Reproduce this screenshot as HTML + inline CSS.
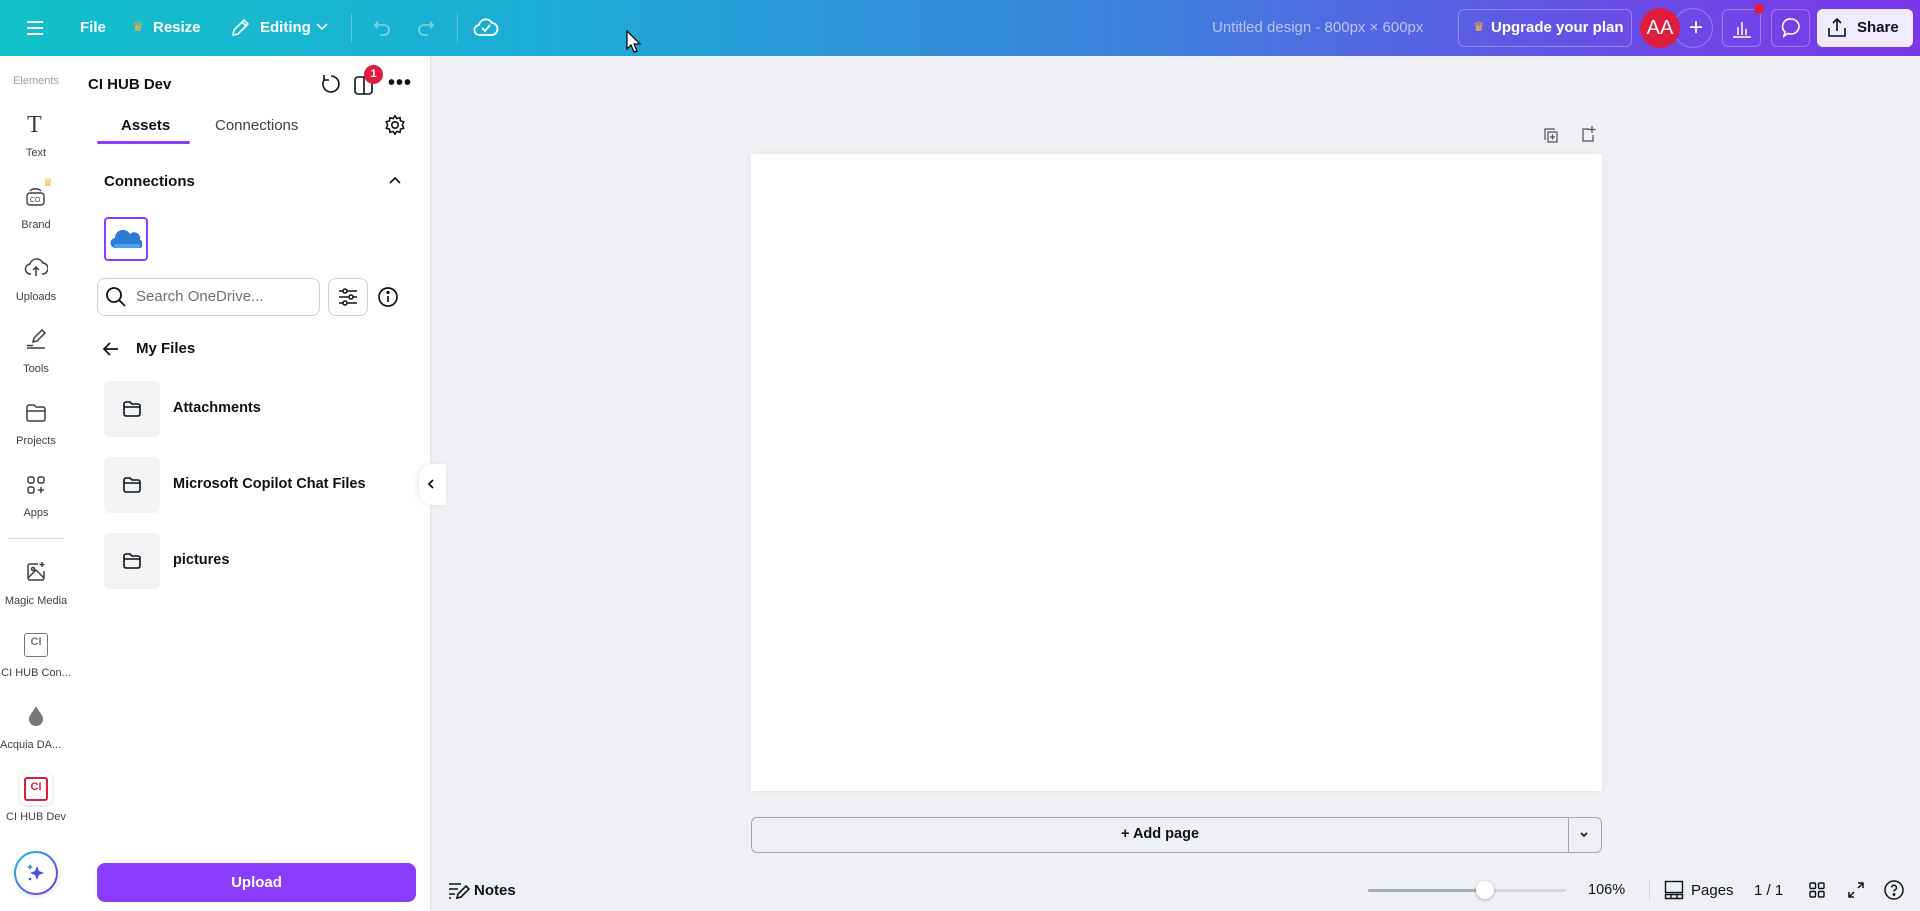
<!DOCTYPE html>
<html><head><meta charset="utf-8"><style>
*{box-sizing:border-box;margin:0;padding:0}
body{width:1920px;height:911px;overflow:hidden;background:#eff0f4;font-family:"Liberation Sans",sans-serif;color:#0d1216;position:relative}
.abs{position:absolute}
.top{left:0;top:0;width:1920px;height:56px;background:linear-gradient(90deg,#11c2ca 0%,#1eaad4 30%,#3f7fde 60%,#6a4ce6 85%,#7b38e8 100%)}
.tw{color:#fff;font-size:15px;font-weight:bold;top:19px}
.rail{left:0;top:56px;width:86px;height:855px;background:#fff}
.ri{width:72px;text-align:center;font-size:11px;color:#3b3f45;left:0;white-space:nowrap}
.panel{left:86px;top:56px;width:345px;height:855px;background:#fff;border-right:1px solid #e3e5e8}
.ft{left:104px;width:56px;height:56px;background:#f2f3f5;border-radius:6px}
.fl{left:173px;font-size:14.5px;font-weight:bold}
</style></head><body>
<div class="abs top"></div>
<svg class="abs" style="left:25px;top:18px" width="20" height="20" viewBox="0 0 20 20" stroke="#fff" stroke-width="2" fill="none"><path d="M2 4h16M2 10h16M2 16h16"/></svg>
<div class="abs tw" style="left:80px">File</div>
<div class="abs" style="left:132px;top:19px;color:#f6b23c;font-size:13px">♛</div>
<div class="abs tw" style="left:153px">Resize</div>
<svg class="abs" style="left:229px;top:17px" width="22" height="22" viewBox="0 0 22 22" stroke="#fff" stroke-width="1.6" fill="none"><path d="M4 18l1-5L15 3l4 4L9 17z M13 5l4 4"/></svg>
<div class="abs tw" style="left:260px">Editing</div>
<svg class="abs" style="left:316px;top:22px" width="12" height="10" viewBox="0 0 12 10" stroke="#fff" stroke-width="1.6" fill="none"><path d="M1 2l5 5 5-5"/></svg>
<div class="abs" style="left:351px;top:13px;width:1px;height:30px;background:rgba(255,255,255,.3)"></div>
<svg class="abs" style="left:371px;top:17px" width="22" height="22" viewBox="0 0 22 22" stroke="rgba(255,255,255,.45)" stroke-width="1.6" fill="none"><path d="M7 5L4 8l3 3M4 8h9a5 5 0 010 10H9"/></svg>
<svg class="abs" style="left:415px;top:17px" width="22" height="22" viewBox="0 0 22 22" stroke="rgba(255,255,255,.45)" stroke-width="1.6" fill="none"><path d="M15 5l3 3-3 3M18 8H9a5 5 0 000 10h4"/></svg>
<div class="abs" style="left:457px;top:13px;width:1px;height:30px;background:rgba(255,255,255,.3)"></div>
<svg class="abs" style="left:473px;top:15px" width="26" height="24" viewBox="0 0 26 24" stroke="#fff" stroke-width="1.8" fill="none"><path d="M7 20a5 5 0 01-1-10 7 7 0 0113-2 5 5 0 01-1 12z"/><path d="M9 13l3 3 5-6"/></svg>
<svg class="abs" style="left:626px;top:30px" width="16" height="24" viewBox="0 0 16 24"><path d="M1 1v18l4-4 3 7 3-1-3-7h6z" fill="#fff" stroke="#000" stroke-width="1.2"/></svg>
<div class="abs" style="left:1212px;top:19px;font-size:15px;color:#b9c4f2">Untitled design - 800px × 600px</div>
<div class="abs" style="left:1458px;top:9px;width:174px;height:38px;border:1px solid rgba(255,255,255,.3);border-radius:6px"></div>
<div class="abs" style="left:1473px;top:19px;color:#f6b23c;font-size:13px">♛</div>
<div class="abs tw" style="left:1491px">Upgrade your plan</div>
<div class="abs" style="left:1673px;top:8px;width:40px;height:40px;border:1px solid rgba(255,255,255,.3);border-radius:50%;color:#fff;font-size:24px;text-align:center;line-height:37px;padding-left:6px">+</div>
<div class="abs" style="left:1640px;top:8px;width:40px;height:40px;border-radius:50%;background:#e11d3f;color:#fff;font-size:20px;text-align:center;line-height:40px">AA</div>
<div class="abs" style="left:1722px;top:9px;width:39px;height:38px;border:1px solid rgba(255,255,255,.3);border-radius:6px"></div>
<svg class="abs" style="left:1731px;top:17px" width="22" height="22" viewBox="0 0 22 22" stroke="#fff" stroke-width="1.5" fill="none"><path d="M2 20h18M7 18V10M11 18V5M15 18v-6"/></svg>
<div class="abs" style="left:1754px;top:4px;width:10px;height:10px;border-radius:50%;background:#e11d3f"></div>
<div class="abs" style="left:1771px;top:9px;width:39px;height:38px;border:1px solid rgba(255,255,255,.3);border-radius:6px"></div>
<svg class="abs" style="left:1779px;top:16px" width="24" height="24" viewBox="0 0 24 24" stroke="#fff" stroke-width="1.6" fill="none"><path d="M12 3a8 7.5 0 110 15 9 9 0 01-3-.5L5 20l1-4A7.5 7.5 0 0112 3z"/></svg>
<div class="abs" style="left:1817px;top:9px;width:96px;height:38px;background:#f0ebfd;border-radius:6px"></div>
<svg class="abs" style="left:1825px;top:16px" width="24" height="24" viewBox="0 0 24 24" stroke="#0d1216" stroke-width="1.6" fill="none"><path d="M12 15V3M8 7l4-4 4 4M4 12v8h16v-8"/></svg>
<div class="abs" style="left:1857px;top:19px;font-size:15px;font-weight:bold;color:#0d1216">Share</div>

<div class="abs rail"></div>
<div class="abs ri" style="top:75px;color:#9aa0a8">Elements</div>
<div class="abs" style="left:27px;top:112px;font-family:'Liberation Serif',serif;font-size:24px;color:#3b3f45">T</div>
<div class="abs ri" style="top:147px">Text</div>
<svg class="abs" style="left:24px;top:184px" width="24" height="24" viewBox="0 0 24 24" stroke="#3b3f45" stroke-width="1.4" fill="none"><rect x="3" y="9" width="17" height="12" rx="3"/><path d="M6 7c3-3 8-3 11 0"/><text x="6" y="18" font-size="7" fill="#3b3f45" stroke="none" font-family="Liberation Sans">CO</text></svg>
<div class="abs" style="left:43px;top:176px;color:#f6b23c;font-size:11px">♛</div>
<div class="abs ri" style="top:219px">Brand</div>
<svg class="abs" style="left:24px;top:256px" width="24" height="24" viewBox="0 0 24 24" stroke="#3b3f45" stroke-width="1.5" fill="none"><path d="M7 18a5 5 0 01-1-10 7 7 0 0113-1 5 5 0 01-1 11M12 20v-8M9 14l3-3 3 3"/></svg>
<div class="abs ri" style="top:291px">Uploads</div>
<svg class="abs" style="left:24px;top:327px" width="24" height="24" viewBox="0 0 24 24" stroke="#3b3f45" stroke-width="1.5" fill="none"><path d="M9 15l1-4 8-8 3 3-8 8zM3 19c2-2 4 1 6-1M3 21h18"/></svg>
<div class="abs ri" style="top:363px">Tools</div>
<svg class="abs" style="left:24px;top:401px" width="24" height="24" viewBox="0 0 24 24" stroke="#3b3f45" stroke-width="1.5" fill="none"><path d="M3 6a2 2 0 012-2h5l2 2h7a2 2 0 012 2v10a2 2 0 01-2 2H5a2 2 0 01-2-2zM3 10h18"/></svg>
<div class="abs ri" style="top:435px">Projects</div>
<svg class="abs" style="left:24px;top:473px" width="24" height="24" viewBox="0 0 24 24" stroke="#3b3f45" stroke-width="1.5" fill="none"><rect x="4" y="4" width="6" height="6" rx="2"/><rect x="14" y="4" width="6" height="6" rx="2"/><rect x="4" y="14" width="6" height="6" rx="2"/><path d="M17 14v6M14 17h6"/></svg>
<div class="abs ri" style="top:507px">Apps</div>
<div class="abs" style="left:8px;top:538px;width:56px;height:1px;background:#dadce0"></div>
<svg class="abs" style="left:24px;top:560px" width="24" height="24" viewBox="0 0 24 24" stroke="#3b3f45" stroke-width="1.5" fill="none"><path d="M14 4H6a2 2 0 00-2 2v12a2 2 0 002 2h12a2 2 0 002-2v-7M4 18l8-8 8 8"/><circle cx="9" cy="9" r="1.5"/><path d="M18 2v5M15.5 4.5h5"/></svg>
<div class="abs ri" style="top:595px">Magic Media</div>
<div class="abs" style="left:24px;top:633px;width:24px;height:24px;border:1.5px solid #777;border-radius:3px;font-size:11px;font-weight:bold;color:#777;text-align:center;line-height:17px">CI</div>
<div class="abs ri" style="top:667px">CI HUB Con...</div>
<svg class="abs" style="left:27px;top:705px" width="18" height="22" viewBox="0 0 18 22"><path d="M9 1C6 7 2 10 2 14a7 7 0 0014 0c0-4-4-7-7-13z" fill="#777"/></svg>
<div class="abs ri" style="top:739px;text-align:left;left:0">Acquia DA...</div>
<div class="abs" style="left:20px;top:773px;width:32px;height:32px;background:#fff;border-radius:8px;box-shadow:0 1px 4px rgba(0,0,0,.15)"></div>
<div class="abs" style="left:24px;top:777px;width:24px;height:24px;border:2px solid #e11d3f;border-radius:3px;font-size:11px;font-weight:bold;color:#e11d3f;text-align:center;line-height:16px">CI</div>
<div class="abs ri" style="top:811px">CI HUB Dev</div>
<div class="abs" style="left:14px;top:851px;width:44px;height:44px;border-radius:50%;background:linear-gradient(#fff,#fff) padding-box,linear-gradient(135deg,#19c4d6,#7d2ae8) border-box;border:2px solid transparent;box-shadow:0 2px 6px rgba(0,0,0,.1)"></div>
<svg class="abs" style="left:24px;top:861px" width="24" height="24" viewBox="0 0 24 24"><path d="M13 5l2 5 5 2-5 2-2 5-2-5-5-2 5-2z" fill="#4b4fe0"/><path d="M6 3l1 2 2 1-2 1-1 2-1-2-2-1 2-1z" fill="#3a8de0"/><circle cx="6" cy="18" r="1.3" fill="#4b4fe0"/></svg>

<div class="abs panel"></div>
<div class="abs" style="left:88px;top:76px;font-size:15px;font-weight:bold">CI HUB Dev</div>
<svg class="abs" style="left:320px;top:73px" width="22" height="22" viewBox="0 0 22 22" stroke="#0d1216" stroke-width="1.6" fill="none"><path d="M11 3a8 8 0 11-7 4M4 2v5h5"/></svg>
<svg class="abs" style="left:353px;top:74px" width="22" height="22" viewBox="0 0 22 22" stroke="#0d1216" stroke-width="1.6" fill="none"><rect x="2" y="3" width="17" height="17" rx="3"/><path d="M11 3v17"/></svg>
<div class="abs" style="left:364px;top:65px;width:19px;height:19px;border-radius:50%;background:#e11d3f;color:#fff;font-size:11px;font-weight:bold;text-align:center;line-height:19px">1</div>
<div class="abs" style="left:388px;top:72px;font-size:20px;font-weight:bold;letter-spacing:1px">•••</div>
<div class="abs" style="left:121px;top:117px;font-size:15px;font-weight:bold">Assets</div>
<div class="abs" style="left:97px;top:141px;width:93px;height:3px;background:#8b3dff;border-radius:2px"></div>
<div class="abs" style="left:215px;top:117px;font-size:15px;color:#3b3f45">Connections</div>
<svg class="abs" style="left:384px;top:114px" width="22" height="22" viewBox="0 0 24 24" stroke="#0d1216" stroke-width="1.7" fill="none"><circle cx="12" cy="12" r="3.5"/><path d="M12 2l2 3 3.5-1 .5 3.5 3.5 1-1.5 3.5 1.5 3.5-3.5 1-.5 3.5-3.5-1-2 3-2-3-3.5 1-.5-3.5-3.5-1L4 12 2.5 8.5l3.5-1 .5-3.5 3.5 1z"/></svg>
<div class="abs" style="left:104px;top:173px;font-size:15px;font-weight:bold">Connections</div>
<svg class="abs" style="left:388px;top:175px" width="14" height="10" viewBox="0 0 14 10" stroke="#0d1216" stroke-width="1.6" fill="none"><path d="M2 8l5-5 5 5"/></svg>
<div class="abs" style="left:104px;top:217px;width:44px;height:44px;border:2px solid #8b3dff;border-radius:4px"></div>
<svg class="abs" style="left:110px;top:228px" width="32" height="22" viewBox="0 0 32 22"><path d="M6 20a5 5 0 01-1-10 8 8 0 0115-4 6 6 0 0110 6 4 4 0 01-2 8z" fill="#2d7bd6"/><path d="M4 16h26v2a2 2 0 01-2 2H6a4 4 0 01-2-4z" fill="#4aa3ec"/></svg>
<div class="abs" style="left:97px;top:278px;width:223px;height:38px;border:1px solid #cdd0d5;border-radius:8px"></div>
<svg class="abs" style="left:105px;top:286px" width="22" height="22" viewBox="0 0 22 22" stroke="#0d1216" stroke-width="1.8" fill="none"><circle cx="9" cy="9" r="7"/><path d="M14 14l6 6"/></svg>
<div class="abs" style="left:136px;top:288px;font-size:15px;color:#6b7079">Search OneDrive...</div>
<div class="abs" style="left:328px;top:278px;width:40px;height:38px;border:1px solid #cdd0d5;border-radius:8px"></div>
<svg class="abs" style="left:337px;top:286px" width="22" height="22" viewBox="0 0 22 22" stroke="#0d1216" stroke-width="1.5" fill="none"><path d="M2 5h18M2 11h18M2 17h18"/><circle cx="8" cy="5" r="2" fill="#fff"/><circle cx="14" cy="11" r="2" fill="#fff"/><circle cx="8" cy="17" r="2" fill="#fff"/></svg>
<svg class="abs" style="left:377px;top:286px" width="22" height="22" viewBox="0 0 22 22" stroke="#0d1216" stroke-width="1.7" fill="none"><circle cx="11" cy="11" r="9"/><path d="M11 10v6"/><circle cx="11" cy="6.5" r=".8" fill="#0d1216"/></svg>
<svg class="abs" style="left:102px;top:341px" width="18" height="16" viewBox="0 0 18 16" stroke="#0d1216" stroke-width="1.7" fill="none"><path d="M16 8H2M8 2L2 8l6 6"/></svg>
<div class="abs" style="left:136px;top:340px;font-size:15px;font-weight:bold">My Files</div>
<div class="abs ft" style="top:381px"></div>
<div class="abs ft" style="top:457px"></div>
<div class="abs ft" style="top:533px"></div>
<svg class="abs" style="left:122px;top:399px" width="20" height="20" viewBox="0 0 20 20" stroke="#0d1216" stroke-width="1.6" fill="none"><path d="M2 5a2 2 0 012-2h4l2 2h6a2 2 0 012 2v8a2 2 0 01-2 2H4a2 2 0 01-2-2zM2 8h16"/></svg>
<svg class="abs" style="left:122px;top:475px" width="20" height="20" viewBox="0 0 20 20" stroke="#0d1216" stroke-width="1.6" fill="none"><path d="M2 5a2 2 0 012-2h4l2 2h6a2 2 0 012 2v8a2 2 0 01-2 2H4a2 2 0 01-2-2zM2 8h16"/></svg>
<svg class="abs" style="left:122px;top:551px" width="20" height="20" viewBox="0 0 20 20" stroke="#0d1216" stroke-width="1.6" fill="none"><path d="M2 5a2 2 0 012-2h4l2 2h6a2 2 0 012 2v8a2 2 0 01-2 2H4a2 2 0 01-2-2zM2 8h16"/></svg>
<div class="abs fl" style="top:400px">Attachments</div>
<div class="abs fl" style="top:476px">Microsoft Copilot Chat Files</div>
<div class="abs fl" style="top:552px">pictures</div>
<div class="abs" style="left:97px;top:863px;width:319px;height:39px;background:#8b3dff;border-radius:8px;color:#fff;font-size:15px;font-weight:bold;text-align:center;line-height:39px">Upload</div>
<div class="abs" style="left:419px;top:464px;width:27px;height:41px;background:#fff;border-radius:14px 0 0 14px;box-shadow:-2px 0 6px rgba(0,0,0,.08)"></div>
<svg class="abs" style="left:426px;top:478px" width="10" height="12" viewBox="0 0 10 12" stroke="#0d1216" stroke-width="1.8" fill="none"><path d="M7 2L3 6l4 4"/></svg>

<svg class="abs" style="left:1542px;top:126px" width="18" height="18" viewBox="0 0 18 18" stroke="#4a4f57" stroke-width="1.2" fill="none"><path d="M4 13H3V3h9v1"/><rect x="6" y="6" width="9" height="10"/><path d="M10.5 8.5v5M8 11h5"/></svg>
<svg class="abs" style="left:1579px;top:125px" width="18" height="18" viewBox="0 0 18 18" stroke="#4a4f57" stroke-width="1.2" fill="none"><path d="M10 4H4v12h10v-6M13 1v7M9.5 4.5h7"/></svg>
<div class="abs" style="left:751px;top:154px;width:851px;height:637px;background:#fff;box-shadow:0 0 8px rgba(0,0,0,.05)"></div>
<div class="abs" style="left:751px;top:817px;width:851px;height:36px;border:1px solid #a3a7ae;border-radius:6px"></div>
<div class="abs" style="left:1568px;top:817px;width:1px;height:36px;background:#a3a7ae"></div>
<div class="abs" style="left:1121px;top:826px;font-size:14.5px;font-weight:bold">+ Add page</div>
<svg class="abs" style="left:1579px;top:831px" width="10" height="8" viewBox="0 0 10 8" stroke="#0d1216" stroke-width="1.6" fill="none"><path d="M2 2l3 3 3-3"/></svg>
<svg class="abs" style="left:448px;top:880px" width="22" height="20" viewBox="0 0 22 20" stroke="#0d1216" stroke-width="1.6" fill="none"><path d="M1 4h12M1 9h9M1 14h6M1 18h2M9 18l1-4 8-8 3 3-8 8z"/></svg>
<div class="abs" style="left:474px;top:882px;font-size:15px;font-weight:bold">Notes</div>
<div class="abs" style="left:1368px;top:889px;width:198px;height:3px;background:#d3d6db;border-radius:2px"></div>
<div class="abs" style="left:1368px;top:889px;width:117px;height:3px;background:#a8adb5;border-radius:2px"></div>
<div class="abs" style="left:1476px;top:881px;width:18px;height:18px;border-radius:50%;background:#fff;box-shadow:0 1px 3px rgba(0,0,0,.3)"></div>
<div class="abs" style="left:1588px;top:882px;font-size:14.5px">106%</div>
<div class="abs" style="left:1649px;top:880px;width:1px;height:20px;background:#cfd2d6"></div>
<svg class="abs" style="left:1664px;top:880px" width="20" height="20" viewBox="0 0 20 20" stroke="#0d1216" stroke-width="1.4" fill="none"><rect x="1.5" y="1.5" width="17" height="11"/><path d="M1.5 14.5h17v4h-17zM7 14.5v4M13 14.5v4"/></svg>
<div class="abs" style="left:1691px;top:882px;font-size:15px">Pages</div>
<div class="abs" style="left:1754px;top:882px;font-size:15px">1 / 1</div>
<svg class="abs" style="left:1808px;top:881px" width="18" height="18" viewBox="0 0 18 18" stroke="#0d1216" stroke-width="1.4" fill="none"><rect x="2" y="2" width="5.5" height="5.5" rx="1"/><rect x="10.5" y="2" width="5.5" height="5.5" rx="1"/><rect x="2" y="10.5" width="5.5" height="5.5" rx="1"/><rect x="10.5" y="10.5" width="5.5" height="5.5" rx="1"/></svg>
<svg class="abs" style="left:1847px;top:881px" width="18" height="18" viewBox="0 0 18 18" stroke="#0d1216" stroke-width="1.5" fill="none"><path d="M11 2h5v5M16 2l-5 5M7 16H2v-5M2 16l5-5"/></svg>
<svg class="abs" style="left:1883px;top:879px" width="22" height="22" viewBox="0 0 22 22" stroke="#0d1216" stroke-width="1.5" fill="none"><circle cx="11" cy="11" r="9"/><path d="M8.5 8.5a2.5 2.5 0 115 .5c0 1.5-2.5 2-2.5 3.5"/><circle cx="11" cy="15.5" r=".7" fill="#0d1216"/></svg>
</body></html>
